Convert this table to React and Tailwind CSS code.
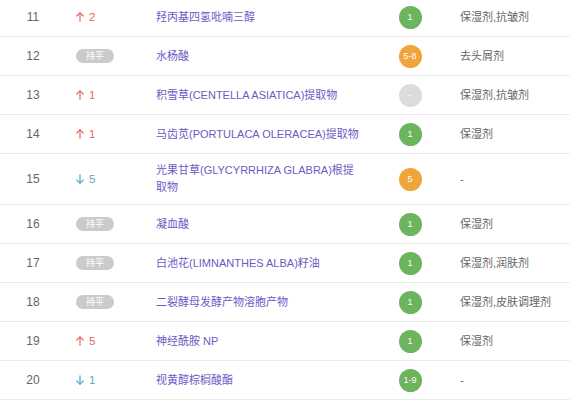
import React from "react";

const rows = [
  { n: 11, t: "up", v: 2, name: "羟丙基四氢吡喃三醇", s: "1", c: "g", f: "保湿剂,抗皱剂" },
  { n: 12, t: "flat", name: "水杨酸", s: "5-8", c: "o", f: "去头屑剂" },
  { n: 13, t: "up", v: 1, name: "积雪草(CENTELLA ASIATICA)提取物", s: "-", c: "x", f: "保湿剂,抗皱剂" },
  { n: 14, t: "up", v: 1, name: "马齿苋(PORTULACA OLERACEA)提取物", s: "1", c: "g", f: "保湿剂" },
  { n: 15, t: "down", v: 5, name: "光果甘草(GLYCYRRHIZA GLABRA)根提取物", s: "5", c: "o", f: "-" },
  { n: 16, t: "flat", name: "凝血酸", s: "1", c: "g", f: "保湿剂" },
  { n: 17, t: "flat", name: "白池花(LIMNANTHES ALBA)籽油", s: "1", c: "g", f: "保湿剂,润肤剂" },
  { n: 18, t: "flat", name: "二裂酵母发酵产物溶胞产物", s: "1", c: "g", f: "保湿剂,皮肤调理剂" },
  { n: 19, t: "up", v: 5, name: "神经酰胺 NP", s: "1", c: "g", f: "保湿剂" },
  { n: 20, t: "down", v: 1, name: "视黄醇棕榈酸酯", s: "1-9", c: "g", f: "-" },
];

const circleCls = {
  g: "bg-[#6cb45e]",
  o: "bg-[#f0a43c]",
  x: "bg-[#dcdcdc]",
};

function Arrow({ down, color }) {
  return (
    <svg width="8" height="10" viewBox="0 0 8 10" fill="none" stroke={color} strokeWidth="1.2" strokeLinecap="round" strokeLinejoin="round">
      {down ? (
        <>
          <path d="M4 0.8V9.2" />
          <path d="M0.8 6L4 9.2L7.2 6" />
        </>
      ) : (
        <>
          <path d="M4 9.2V0.8" />
          <path d="M0.8 4L4 0.8L7.2 4" />
        </>
      )}
    </svg>
  );
}

function Trend({ t, v }) {
  if (t === "flat") {
    return (
      <span className="inline-flex items-center justify-center w-[38px] h-[14px] rounded-full bg-[#cbcbcb] text-white text-[9px] leading-none">
        持平
      </span>
    );
  }
  const up = t === "up";
  const color = up ? "#e8675c" : "#5ba4c7";
  return (
    <span className={`inline-flex items-center gap-[5px] text-[11.5px] ${up ? "text-[#e8675c]" : "text-[#5ba4c7]"}`}>
      <Arrow down={!up} color={color} />
      <span>{v}</span>
    </span>
  );
}

export default function App() {
  return (
    <div
      className="w-[570px] h-[400px] overflow-hidden bg-white"
      style={{ fontFamily: '"Liberation Sans", "Noto Sans CJK SC", sans-serif' }}
    >
      <div className="-mt-[2px]">
        {rows.map((r) => (
          <div
            key={r.n}
            className="grid grid-cols-[66px_90px_204px_100px_1fr] items-center min-h-[39px] border-b border-[#ececec] py-[8px] text-[11px] leading-[17px]"
          >
            <div className="text-center text-[12px] text-[#666]">{r.n}</div>
            <div className="pl-[10px] flex items-center h-[17px]">
              <Trend t={r.t} v={r.v} />
            </div>
            <div className="text-[#6a5cc4]">{r.name}</div>
            <div className="flex justify-center items-center h-[17px]">
              <span
                className={`shrink-0 w-[23px] h-[23px] rounded-full flex items-center justify-center text-white text-[9px] leading-none ${circleCls[r.c]}`}
              >
                {r.s}
              </span>
            </div>
            <div className="text-[#666]">{r.f}</div>
          </div>
        ))}
      </div>
    </div>
  );
}
